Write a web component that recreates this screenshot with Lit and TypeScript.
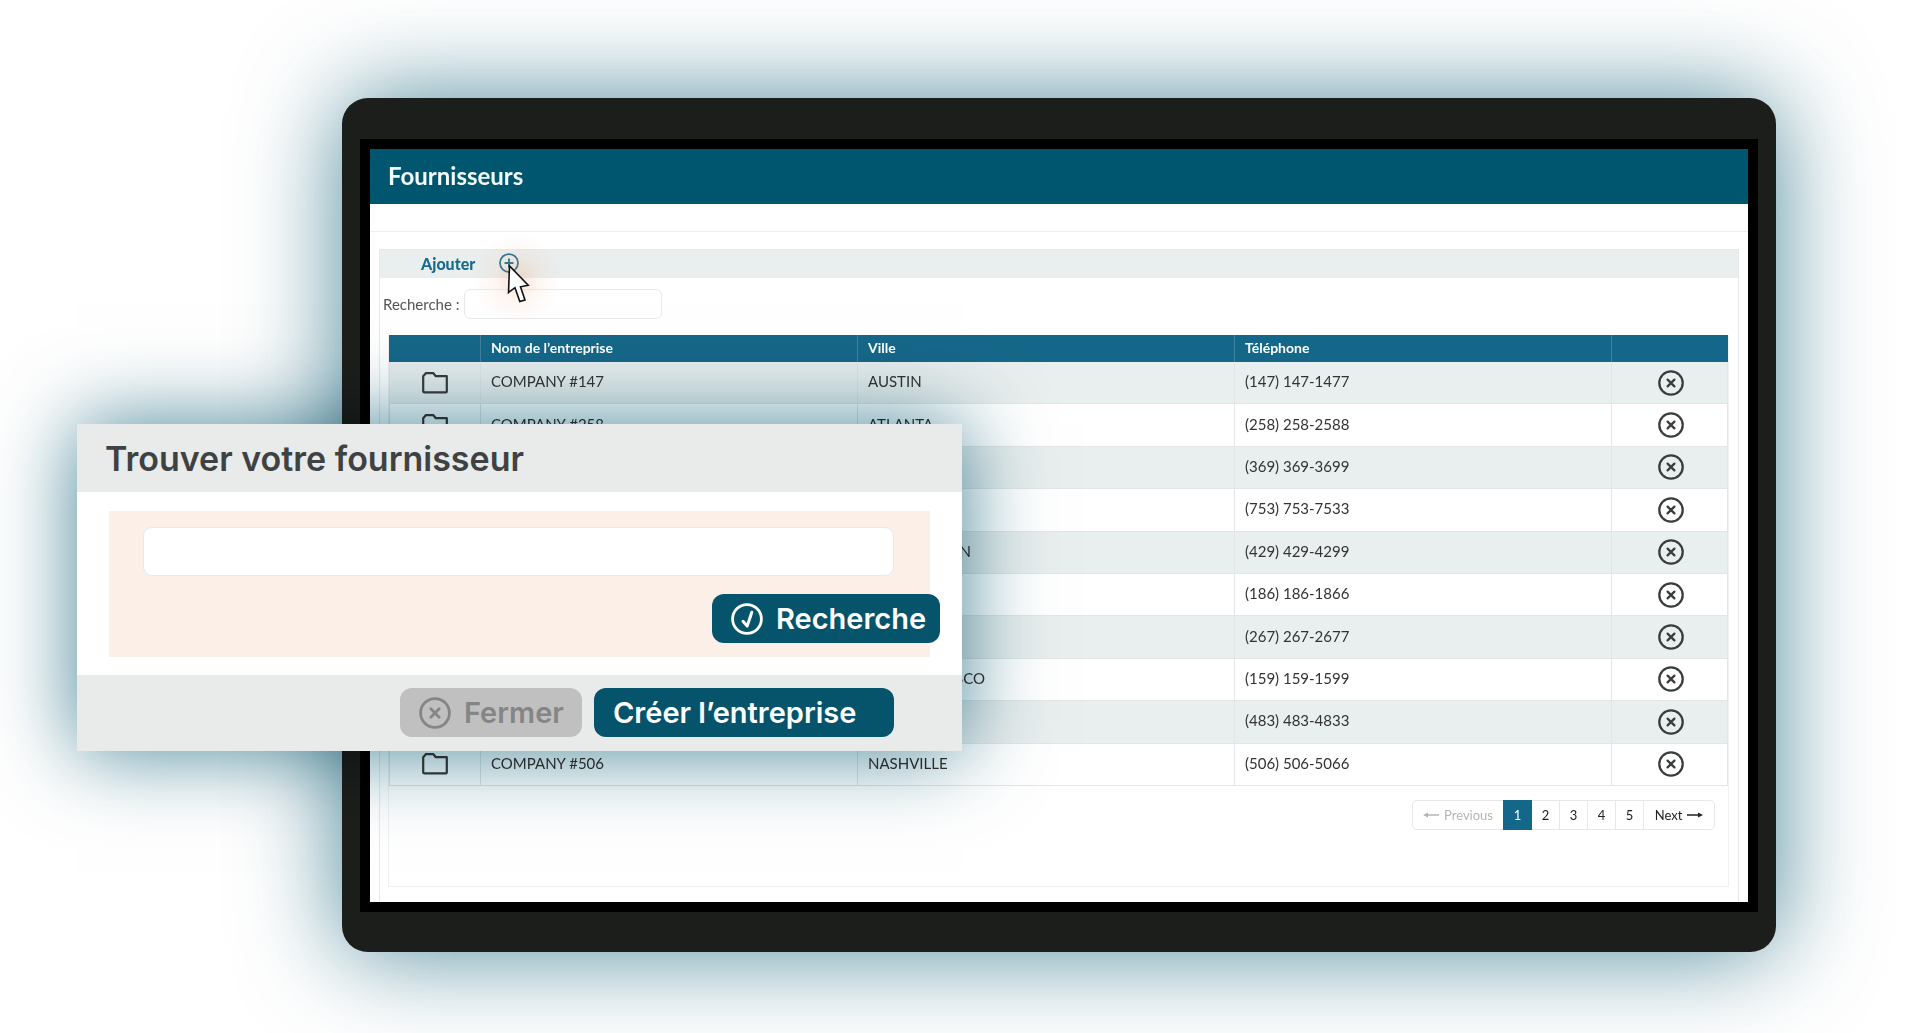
import { LitElement, html, css, svg } from "lit";
import { customElement, property } from "lit/decorators.js";

interface Supplier {
  company: string;
  city: string;
  phone: string;
}

const SUPPLIERS: Supplier[] = [
  { company: "COMPANY #147", city: "AUSTIN", phone: "(147) 147-1477" },
  { company: "COMPANY #258", city: "ATLANTA", phone: "(258) 258-2588" },
  { company: "", city: "", phone: "(369) 369-3699" },
  { company: "", city: "", phone: "(753) 753-7533" },
  { company: "", city: "WASHINGTON", phone: "(429) 429-4299" },
  { company: "", city: "", phone: "(186) 186-1866" },
  { company: "", city: "", phone: "(267) 267-2677" },
  { company: "", city: "SAN FRANCISCO", phone: "(159) 159-1599" },
  { company: "", city: "", phone: "(483) 483-4833" },
  { company: "COMPANY #506", city: "NASHVILLE", phone: "(506) 506-5066" },
];

const circled = (inner: unknown) => html`<svg viewBox="0 0 32 32" fill="none" stroke="currentColor" stroke-linecap="round" stroke-linejoin="round" aria-hidden="true">
  <circle cx="16" cy="16" r="14.4" stroke-width="2.8"></circle>${inner}
</svg>`;

const closeIcon = circled(svg`<path d="M11.8 11.8l8.4 8.4M20.2 11.8l-8.4 8.4" stroke-width="2.8"></path>`);
const checkIcon = circled(svg`<path d="M12 18.3l4.2 4.8L20.8 9.200" stroke-width="3"></path>`);
const plusIcon = circled(svg`<path d="M16 10v12M10 16h12" stroke-width="3"></path>`);

const folderIcon = html`<svg viewBox="0 0 26 22" fill="none" stroke="currentColor" stroke-width="2.2" stroke-linejoin="round" aria-hidden="true">
  <path d="M1.200 18.500V4.200L3.800 1.200h7.600l2.400 3h11v15.200a1 1 0 0 1-1 1H2.400a1.200 1.200 0 0 1-1.200-1.200z"></path>
</svg>`;

@customElement("supplier-table")
export class SupplierTable extends LitElement {
  @property({ attribute: false }) rows: Supplier[] = [];

  static styles = css`
    :host { display: block; }
    .grid {
      width: 100%;
      height: 451px;
      table-layout: fixed;
      border-collapse: separate;
      border-spacing: 0;
      font-size: 15px;
      color: #333;
    }
    .open-col { width: 92px; }
    .delete-col { width: 116px; }
    .head {
      height: 27px;
      padding: 0 10px 2px;
      box-sizing: border-box;
      background: #156789;
      color: #fff;
      font-size: 14px;
      font-weight: 700;
      text-align: left;
      border-right: 1px solid #3d82a0;
    }
    .head:last-child { border-right-color: #156789; }
    .cell {
      padding: 0 10px 3px;
      border-right: 1px solid #e2e6e6;
      border-bottom: 1px solid #e2e6e6;
    }
    .cell:first-child { border-left: 1px solid #e2e6e6; }
    .row:nth-child(odd) .cell { background: #e9eeee; }
    .center { padding: 0; text-align: center; }
    .center:last-child { padding-left: 3px; }
    .icon-button {
      display: inline-flex;
      padding: 0;
      border: 0;
      background: none;
      color: #3a3d3d;
      vertical-align: middle;
      cursor: pointer;
    }
    .folder svg { width: 26px; height: 22px; }
    .remove svg { width: 26px; height: 26px; }
  `;

  render() {
    return html`<table class="grid">
      <colgroup><col class="open-col" /><col /><col /><col /><col class="delete-col" /></colgroup>
      <thead>
        <tr>
          <th class="head"></th>
          <th class="head" scope="col">Nom de l’entreprise</th>
          <th class="head" scope="col">Ville</th>
          <th class="head" scope="col">Téléphone</th>
          <th class="head"></th>
        </tr>
      </thead>
      <tbody>
        ${this.rows.map(
          (r) => html`<tr class="row">
            <td class="cell center"><button class="icon-button folder" aria-label="Ouvrir ${r.phone}">${folderIcon}</button></td>
            <td class="cell">${r.company}</td>
            <td class="cell">${r.city}</td>
            <td class="cell">${r.phone}</td>
            <td class="cell center"><button class="icon-button remove" aria-label="Supprimer ${r.phone}">${closeIcon}</button></td>
          </tr>`
        )}
      </tbody>
    </table>`;
  }
}

@customElement("page-nav")
export class PageNav extends LitElement {
  static styles = css`
    :host { display: block; }
    .pages {
      display: flex;
      width: fit-content;
      margin-left: auto;
      height: 30px;
      box-sizing: border-box;
      border: 1px solid #e6e8e8;
      border-radius: 5px;
      font-size: 13px;
    }
    .page {
      display: flex;
      align-items: center;
      justify-content: center;
      gap: 5px;
      box-sizing: border-box;
      width: 28px;
      padding: 0;
      border: 0;
      border-right: 1px solid #e6e8e8;
      background: none;
      color: #222;
      font: inherit;
      cursor: pointer;
    }
    .page svg { width: 16px; height: 6px; }
    .previous { width: 90px; color: #b4b6b6; border-right: 0; }
    .next { width: 70px; border-right: 0; }
    .current { margin: -1px 0; width: 29px; background: #156789; color: #fff; border-right: 0; }
  `;

  render() {
    return html`<nav class="pages" aria-label="Pagination">
      <button class="page previous" disabled>
        <svg viewBox="0 0 16 6" fill="currentColor" aria-hidden="true"><path d="M0 3L5 .6V2.300H16V3.700H5V5.400z"></path></svg>Previous
      </button>
      <button class="page current" aria-current="page">1</button>
      ${[2, 3, 4, 5].map((n) => html`<button class="page">${n}</button>`)}
      <button class="page next">
        Next<svg viewBox="0 0 16 6" fill="currentColor" aria-hidden="true"><path d="M16 3L11 .6V2.300H0V3.700H11V5.400z"></path></svg>
      </button>
    </nav>`;
  }
}

@customElement("supplier-dialog")
export class SupplierDialog extends LitElement {
  static styles = css`
    :host {
      display: block;
      font-family: Inter, "Liberation Sans", sans-serif;
    }
    /* The glow darkens what lies under it, so black stays black. */
    .glow {
      position: absolute;
      inset: 0;
      box-shadow: 0 0 80px rgba(0, 86, 110, 0.72);
      mix-blend-mode: multiply;
    }
    .dialog { position: relative; background: #fff; }
    .title {
      margin: 0;
      padding: 0 28px;
      height: 68px;
      line-height: 70px;
      background: #e8ebea;
      color: #3e4242;
      font-size: 34px;
      font-weight: 600;
    }
    .body { padding: 19px 32px 18px; }
    .search {
      display: flex;
      flex-direction: column;
      gap: 18px;
      padding: 16px 36px 14px 34px;
      background: #fbefe7;
    }
    .query {
      width: 100%;
      height: 49px;
      box-sizing: border-box;
      padding: 0 16px;
      border: 1px solid #e8e9e8;
      border-radius: 9px;
      background: #fff;
      font: inherit;
      font-size: 22px;
    }
    .button {
      display: flex;
      align-items: center;
      gap: 13px;
      box-sizing: border-box;
      height: 49px;
      padding: 0 12px 0 19px;
      border: 0;
      border-radius: 12px;
      background: #05546b;
      color: #fff;
      font: inherit;
      font-size: 29px;
      font-weight: 600;
      white-space: nowrap;
      cursor: pointer;
    }
    .button svg { width: 32px; height: 32px; flex: none; }
    .submit { width: 228px; align-self: flex-end; margin-right: -46px; }
    .close { width: 182px; background: #c0c0c0; color: #858585; }
    .create { width: 300px; }
    .footer {
      display: flex;
      justify-content: flex-end;
      gap: 12px;
      padding: 13px 68px 14px 32px;
      background: #e8ebea;
    }
  `;

  render() {
    return html`<div class="glow"></div>
      <section class="dialog" role="dialog" aria-labelledby="title">
        <h2 class="title" id="title">Trouver votre fournisseur</h2>
        <div class="body">
          <div class="search">
            <input class="query" type="text" aria-labelledby="title" />
            <button class="button submit">${checkIcon}Recherche</button>
          </div>
        </div>
        <footer class="footer">
          <button class="button close">${closeIcon}Fermer</button>
          <button class="button create">Créer l’entreprise</button>
        </footer>
      </section>`;
  }
}

@customElement("app-root")
export class AppRoot extends LitElement {
  static styles = css`
    :host {
      display: block;
      position: relative;
      overflow: hidden;
      box-sizing: border-box;
      min-height: 100vh;
      padding: 98px 144px 81px 342px;
      background: #fff;
      font-family: Lato, "Liberation Sans", sans-serif;
    }
    .device {
      padding: 41px 18px 40px;
      border-radius: 26px;
      background: #1c1e1b;
      box-shadow: 0 0 100px rgba(0, 86, 110, 0.7);
    }
    .bezel { padding: 10px; background: #000; }
    .screen { background: #fff; }
    .topbar {
      margin: 0;
      padding: 0 18px;
      height: 55px;
      line-height: 53px;
      background: #00566e;
      color: #f2fafa;
      font-size: 24px;
      font-weight: 700;
    }
    .strip { height: 27px; border-bottom: 1px solid #eef0f0; }
    .panel {
      margin: 17px 9px 0;
      padding-bottom: 15px;
      border: 1px solid #e6e9e9;
      border-bottom: 0;
    }
    .toolbar {
      display: flex;
      align-items: center;
      height: 28px;
      padding-left: 41px;
      background: #e9eeee;
    }
    .add {
      display: flex;
      align-items: center;
      gap: 24px;
      padding: 0 0 2px;
      border: 0;
      background: none;
      color: #1a6a8c;
      font: inherit;
      font-size: 16px;
      font-weight: 900;
      cursor: pointer;
    }
    .pointer-anchor { position: relative; display: flex; }
    .pointer-anchor svg { width: 20px; height: 20px; }
    .halo {
      position: absolute;
      left: -27px;
      top: -20px;
      width: 90px;
      height: 90px;
      background: radial-gradient(closest-side, rgba(240, 170, 130, 0.34), rgba(244, 190, 160, 0.13) 50%, rgba(250, 220, 200, 0));
    }
    .pointer-anchor .pointer {
      position: absolute;
      left: 8px;
      top: 11px;
      width: 24px;
      height: 40px;
    }
    .filter {
      display: flex;
      align-items: center;
      gap: 5px;
      padding: 11px 3px 16px;
      color: #555;
      font-size: 15px;
    }
    .filter-input {
      width: 198px;
      height: 30px;
      box-sizing: border-box;
      padding: 0 8px;
      border: 1px solid #e8ebeb;
      border-radius: 6px;
      background: #fff;
      font: inherit;
    }
    .results {
      margin: 0 9px 0 8px;
      border: 1px solid #f0f2f2;
      border-top: 0;
    }
    .pager { padding: 14px 13px 56px; }
    .overlay {
      position: absolute;
      left: 77px;
      top: 424px;
      width: calc(50% - 75px);
    }
  `;

  render() {
    return html`<main class="device">
        <div class="bezel">
          <div class="screen">
            <h1 class="topbar">Fournisseurs</h1>
            <div class="strip"></div>
            <div class="panel">
              <div class="toolbar">
                <button class="add">
                  Ajouter
                  <span class="pointer-anchor">
                    ${plusIcon}
                    <span class="halo"></span>
                    <svg class="pointer" viewBox="0 0 24 40" fill="#fff" stroke="#111" stroke-width="1.600" stroke-linejoin="miter" aria-hidden="true">
                      <path d="M2.500 2L1.500 28.500L8 23.700L12.800 37.600L18 36L13.500 22.800L21.200 21.200z"></path>
                    </svg>
                  </span>
                </button>
              </div>
              <div class="filter">
                <label for="filter">Recherche :</label>
                <input class="filter-input" id="filter" type="search" />
              </div>
              <div class="results">
                <supplier-table .rows=${SUPPLIERS}></supplier-table>
                <div class="pager"><page-nav></page-nav></div>
              </div>
            </div>
          </div>
        </div>
      </main>
      <supplier-dialog class="overlay"></supplier-dialog>`;
  }
}
